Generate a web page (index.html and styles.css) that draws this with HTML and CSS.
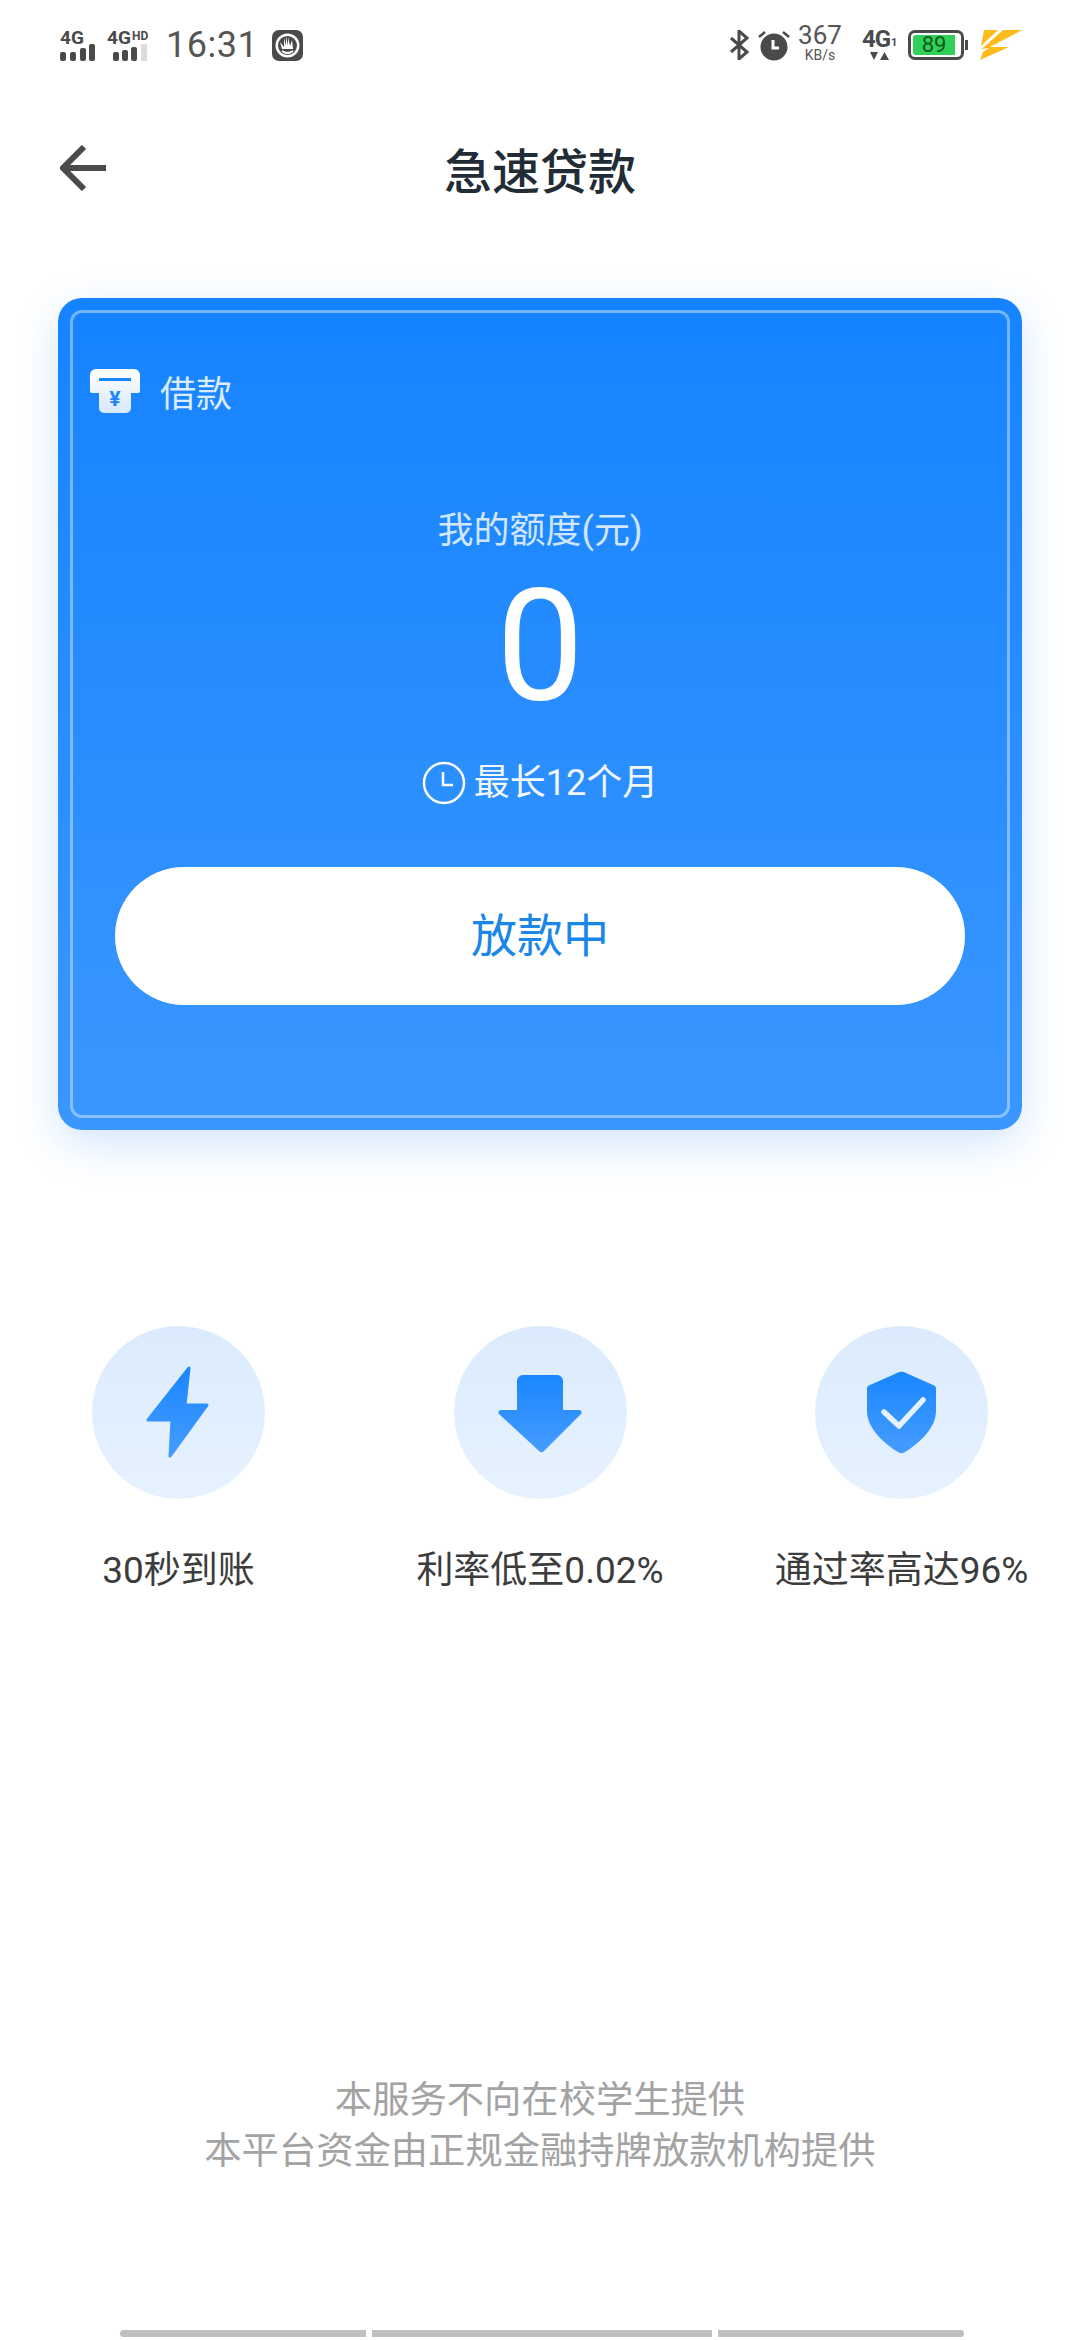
FILE: index.html
```html
<!DOCTYPE html>
<html lang="zh-CN">
	<head>
		<meta charset="utf-8">
		<title>急速贷款</title>
		<link rel="stylesheet" href="styles.css">
	</head>
	<body>
		<div class="page">
			<div class="statusbar">
				<svg class="sig1" width="36" height="32" viewBox="0 0 36 32">
					<text x="0" y="15" class="sigtext">4G</text>
					<rect x="0" y="23" width="6" height="9" rx="2"/>
					<rect x="10" y="23" width="6" height="9" rx="2"/>
					<rect x="20" y="19" width="6" height="13" rx="2"/>
					<rect x="29" y="15" width="6" height="17" rx="2"/>
				</svg>
				<svg class="sig2" width="46" height="32" viewBox="0 0 46 32">
					<text x="0" y="15" class="sigtext">4G</text>
					<text x="25" y="11" class="sigsmall">HD</text>
					<rect x="6" y="23" width="6" height="9" rx="2"/>
					<rect x="15" y="21" width="6" height="11" rx="2"/>
					<rect x="24" y="18" width="6" height="14" rx="2"/>
					<rect x="34" y="15" width="6" height="17" fill="#dcdcdc"/>
				</svg>
				<span class="time">16:31</span>
				<svg class="hand" width="31" height="31" viewBox="0 0 31 31">
					<rect width="31" height="31" rx="7" fill="#4a4a4a"/>
					<circle cx="15.5" cy="15.5" r="12" fill="#fff"/>
					<circle cx="15.5" cy="15.5" r="9.5" fill="#4a4a4a"/>
					<path d="M8 12l4 5V8l2 8V6l2 10V7l2 9 2-6 1 9H10z" fill="#fff"/>
					<path d="M10 21q5.500 4 11 0" fill="none" stroke="#fff" stroke-width="2"/>
				</svg>
				<div class="spacer"></div>
				<svg class="bt" width="20" height="30" viewBox="0 0 20 30">
					<path d="M2 8l16 14-8 7V1l8 7L2 22" fill="none" stroke="#4a4a4a" stroke-width="3"/>
				</svg>
				<svg class="alarm" width="32" height="31" viewBox="0 0 32 31">
					<circle cx="16" cy="17" r="13.500" fill="#4a4a4a"/>
					<path d="M15 10v8h6" fill="none" stroke="#fff" stroke-width="3"/>
					<path d="M1 7l6-5M31 7l-6-5" fill="none" stroke="#4a4a4a" stroke-width="2.500"/>
				</svg>
				<div class="speed">
					<span class="speednum">367</span>
					<span class="speedunit">KB/s</span>
				</div>
				<svg class="net" width="34" height="32" viewBox="0 0 34 32">
					<text x="0" y="18" class="nettext">4G</text>
					<text x="29" y="17" class="netsmall">1</text>
					<path d="M8 23h8l-4 8zM18 31h9l-4.500-8z" fill="#4a4a4a"/>
				</svg>
				<div class="battery">
					<div class="batterybody"><span class="batterylevel">89</span></div>
					<div class="batterytip"></div>
				</div>
				<svg class="bolt" width="42" height="30" viewBox="0 0 42 30">
					<path d="M4 0h14L1 16zM23 0h19L10 17h19L0 30l3-8 6-4-8 1 3-2z" fill="#fbbc1c"/>
				</svg>
			</div>

			<div class="header">
				<svg class="back" width="46" height="46" viewBox="0 0 46 46">
					<path d="M2 23h44M24 2L3 23l21 21" fill="none" stroke="#4a4a4a" stroke-width="6"/>
				</svg>
				<h1 class="title">急速贷款</h1>
			</div>

			<div class="card">
				<div class="frame">
					<div class="tag">
						<svg width="50" height="44" viewBox="0 0 50 44">
							<defs>
								<linearGradient id="tagfill" x1="0" y1="0" x2="0" y2="1">
									<stop offset="0" stop-color="#ffffff"/>
									<stop offset="1" stop-color="#d9e8fc"/>
								</linearGradient>
							</defs>
							<path d="M6 0h38a6 6 0 0 1 6 6v16a2 2 0 0 1-2 2h-7v15a5 5 0 0 1-5 5H14a5 5 0 0 1-5-5V24H2a2 2 0 0 1-2-2V6a6 6 0 0 1 6-6z" fill="url(#tagfill)"/>
							<rect x="9" y="9" width="32" height="3" fill="#1a86ff"/>
							<text x="25" y="37" class="tagyen">¥</text>
						</svg>
						<span class="tagtext">借款</span>
					</div>
					<div class="quota">我的额度(元)</div>
					<div class="amount">0</div>
					<div class="term">
						<svg width="44" height="44" viewBox="0 0 44 44">
							<circle cx="22" cy="22" r="20" fill="none" stroke="#fff" stroke-width="2.500"/>
							<path d="M21 11v13h10" fill="none" stroke="#fff" stroke-width="2.500"/>
						</svg>
						<span>最长12个月</span>
					</div>
					<div class="btn">放款中</div>
				</div>
			</div>

			<div class="features">
				<div class="feature">
					<div class="circle">
						<svg width="173" height="173" viewBox="0 0 173 173">
							<defs>
								<linearGradient id="iconfill" x1="0" y1="0" x2="0" y2="1">
									<stop offset="0" stop-color="#1a86ff"/>
									<stop offset="1" stop-color="#459cff"/>
								</linearGradient>
							</defs>
							<path d="M97 42L93 79H115L78 130L80 94H56z" fill="url(#iconfill)" stroke="url(#iconfill)" stroke-width="3" stroke-linejoin="round"/>
						</svg>
					</div>
					<div class="label">30秒到账</div>
				</div>
				<div class="feature">
					<div class="circle">
						<svg width="173" height="173" viewBox="0 0 173 173">
							<path d="M63 55a6 6 0 0 1 6-6h34a6 6 0 0 1 6 6v29h16a2.500 2.500 0 0 1 2 4l-37 37a3 3 0 0 1-5 0L45 88a2.500 2.500 0 0 1 2-4h16z" fill="url(#iconfill)"/>
						</svg>
					</div>
					<div class="label">利率低至0.02%</div>
				</div>
				<div class="feature">
					<div class="circle">
						<svg width="173" height="173" viewBox="0 0 173 173">
							<path d="M82 47a10 10 0 0 1 9 0l27 12a4 4 0 0 1 3 4v22c0 18-18 33-31 41a6 6 0 0 1-7 0C70 118 52 103 52 85V63a4 4 0 0 1 3-4z" fill="url(#iconfill)"/>
							<path d="M69 86l15 14 24-26" fill="none" stroke="#e6f1ff" stroke-width="5.500" stroke-linecap="round" stroke-linejoin="round"/>
						</svg>
					</div>
					<div class="label">通过率高达96%</div>
				</div>
			</div>

			<div class="notice">
				<p>本服务不向在校学生提供</p>
				<p>本平台资金由正规金融持牌放款机构提供</p>
			</div>

			<div class="homebar">
				<div class="seg seg1"></div>
				<div class="seg seg2"></div>
				<div class="seg seg3"></div>
			</div>
		</div>
	</body>
</html>
```

FILE: styles.css
```css
* {
	box-sizing: border-box;
}

html, body {
	margin: 0;
	padding: 0;
	background: #fff;
}

body {
	font-family: Roboto, "Noto Sans CJK SC", sans-serif;
}

.page {
	width: 1080px;
	height: 2340px;
	display: flex;
	flex-direction: column;
	overflow: hidden;
}

/* status bar */
.statusbar {
	height: 90px;
	flex: none;
	display: flex;
	align-items: center;
	padding: 0 58px 0 60px;
}

.sig1, .sig2 {
	fill: #4a4a4a;
}

.sig2 {
	margin-left: 11px;
}

.sigtext {
	font: 700 19px Roboto, sans-serif;
}

.sigsmall {
	font: 700 12px Roboto, sans-serif;
}

.time {
	margin-left: 13px;
	font-size: 36px;
	letter-spacing: 0.5px;
	color: #555;
}

.hand {
	margin-left: 14px;
}

.spacer {
	flex: 1;
}

.alarm {
	margin-left: 9px;
}

.speed {
	margin-left: 7px;
	width: 46px;
	display: flex;
	flex-direction: column;
	align-items: center;
	color: #555;
	line-height: 1;
}

.speednum {
	font-size: 26px;
	margin-top: -6px;
}

.speedunit {
	font-size: 14px;
}

.net {
	margin-left: 19px;
	fill: #4a4a4a;
}

.nettext {
	font: 700 24px Roboto, sans-serif;
	letter-spacing: -1px;
}

.netsmall {
	font: 700 11px Roboto, sans-serif;
}

.battery {
	margin-left: 12px;
	display: flex;
	align-items: center;
}

.batterybody {
	width: 56px;
	height: 30px;
	border: 3px solid #4a4a4a;
	border-radius: 7px;
	padding: 2px;
	display: flex;
}

.batterylevel {
	width: 42px;
	background: #30d158;
	border-radius: 3px 0 0 3px;
	color: #0b5a20;
	font-size: 22px;
	line-height: 20px;
	text-align: center;
}

.batterytip {
	width: 3px;
	height: 10px;
	margin-left: 1px;
	background: #4a4a4a;
}

.bolt {
	margin-left: 12px;
}

/* title */
.header {
	height: 156px;
	flex: none;
	display: flex;
	align-items: center;
	justify-content: center;
	position: relative;
}

.back {
	position: absolute;
	left: 60px;
	top: 55px;
}

.title {
	margin: 0;
	font-size: 48px;
	font-weight: 500;
	color: #222c36;
}

/* loan card */
.card {
	flex: none;
	height: 832px;
	margin: 52px 58px 0;
	padding: 12px;
	border-radius: 24px;
	background: linear-gradient(180deg, #1583ff, #3b97ff);
	box-shadow: 0 14px 44px rgba(30, 130, 250, 0.2);
}

.frame {
	height: 100%;
	border: 3px solid rgba(255, 255, 255, 0.4);
	border-radius: 12px;
	display: flex;
	flex-direction: column;
	align-items: center;
}

.tag {
	align-self: flex-start;
	display: flex;
	align-items: center;
	margin: 52px 0 0 17px;
	color: #dcecff;
	font-size: 36px;
}

.tagtext {
	margin-left: 20px;
}

.tagyen {
	font: 700 21px Roboto, sans-serif;
	fill: #1a86ff;
	text-anchor: middle;
}

.quota {
	margin-top: 88px;
	font-size: 36px;
	line-height: 52px;
	color: #d2e6ff;
}

.amount {
	margin-top: 14px;
	font-size: 156px;
	line-height: 150px;
	color: #fff;
}

.term {
	margin-top: 36px;
	display: flex;
	align-items: center;
	gap: 8px;
	font-size: 36px;
	line-height: 52px;
	color: #f0f7ff;
}

.btn {
	margin-top: 58px;
	width: 850px;
	height: 138px;
	border-radius: 69px;
	background: #fff;
	color: #1a86e8;
	font-size: 46px;
	line-height: 138px;
	text-align: center;
}

/* three selling points */
.features {
	flex: none;
	margin-top: 196px;
	display: grid;
	grid-template-columns: repeat(3, 361.5px);
	justify-content: center;
}

.feature {
	display: flex;
	flex-direction: column;
	align-items: center;
}

.circle {
	width: 173px;
	height: 173px;
	border-radius: 50%;
	background: linear-gradient(180deg, #dbebfd, #e7f2ff);
}

.circle svg {
	display: block;
}

.label {
	margin-top: 46px;
	font-size: 37px;
	line-height: 52px;
	color: #3c3c3c;
	white-space: nowrap;
}

/* bottom */
.notice {
	margin-top: auto;
	text-align: center;
	font-size: 37.3px;
	line-height: 51px;
	color: #a3a3a3;
}

.notice p {
	margin: 0;
}

.homebar {
	flex: none;
	display: flex;
	gap: 6px;
	margin: 153px 0 3px 120px;
}

.seg {
	height: 7px;
	background: #bfbfbf;
}

.seg1 {
	width: 246px;
	border-radius: 4px 0 0 4px;
}

.seg2 {
	width: 340px;
}

.seg3 {
	width: 246px;
	border-radius: 0 4px 4px 0;
}
```
